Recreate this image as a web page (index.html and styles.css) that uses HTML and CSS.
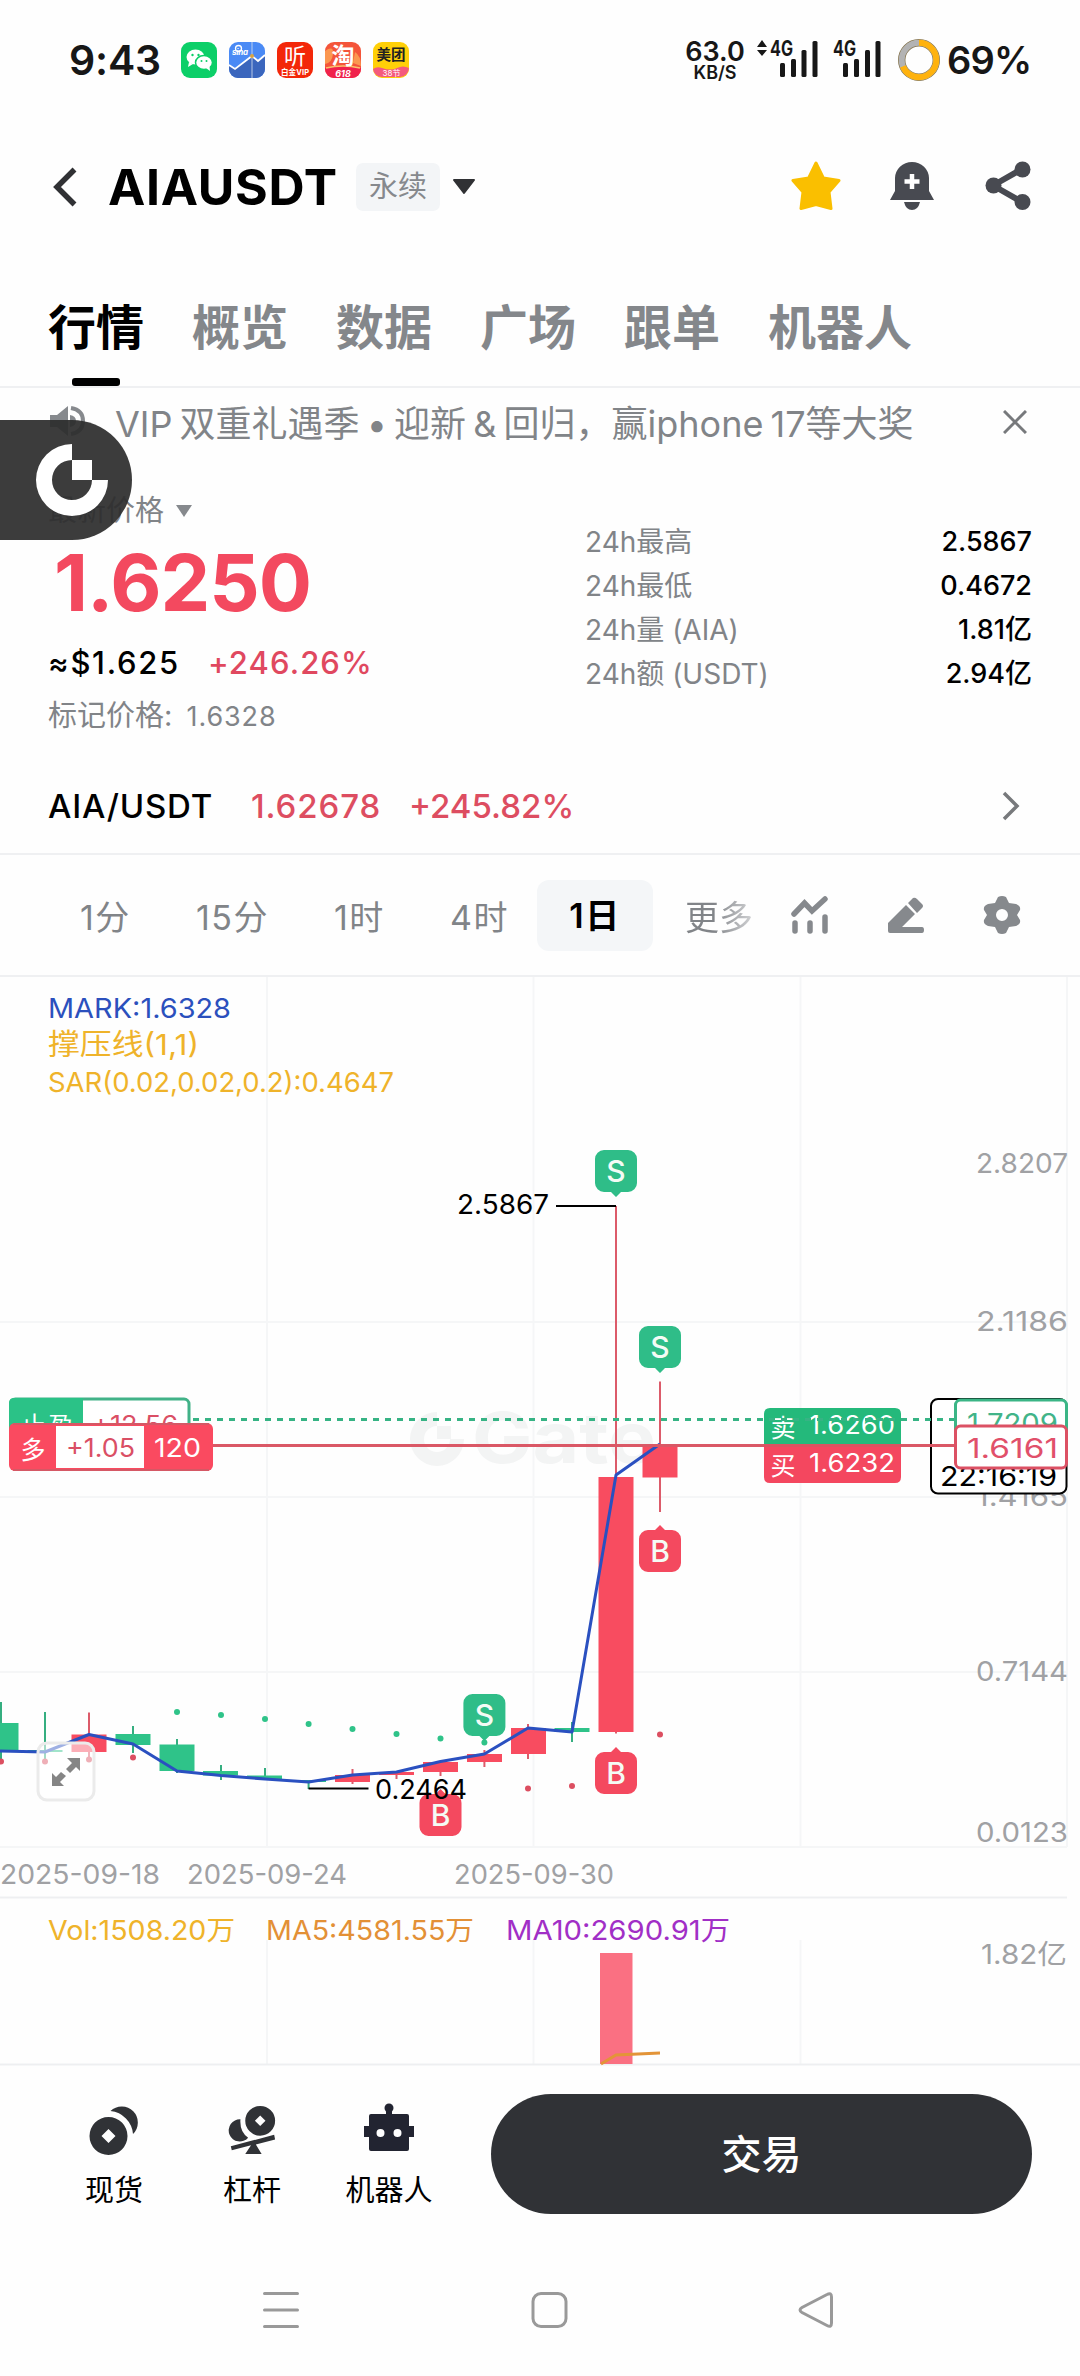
FILE: index.html
```html
<!DOCTYPE html>
<html lang="zh-CN">
<head>
<meta charset="utf-8">
<title>AIAUSDT 永续</title>
<link rel="stylesheet" href="styles.css">
</head>
<body>
<main class="screen">
  <header class="status">
    <span class="clock">9:43</span>
    <div class="apps">
      <svg class="app" viewBox="0 0 36 36"><rect width="36" height="36" rx="9" fill="#0ccf68"/><g fill="#fff"><ellipse cx="14.500" cy="15" rx="9" ry="7.500"/><path d="M8 20l-1 5 5-3z"/><ellipse cx="23" cy="20.500" rx="8.500" ry="7" stroke="#0ccf68" stroke-width="1.500"/><path d="M25 26l4 3-.5-5z"/></g><g fill="#0ccf68"><circle cx="11.500" cy="13" r="1.200"/><circle cx="17.500" cy="13" r="1.200"/><circle cx="20.500" cy="19" r="1"/><circle cx="25.500" cy="19" r="1"/></g></svg>
      <svg class="app" viewBox="0 0 36 36"><rect width="36" height="36" rx="9" fill="#4a8af5"/><path d="M0 23l6 4 17-13 6 5 7-6v14a9 9 0 0 1-9 9H9a9 9 0 0 1-9-9z" fill="#3b66bd"/><path d="M0 23l6 4 17-13 6 5 7-6" fill="none" stroke="#fff" stroke-width="1.800"/><path d="M23 0v36" stroke="#d5dff0" stroke-width=".8"/><circle cx="23" cy="14" r="2" fill="#d9a441"/><circle cx="9.500" cy="6.500" r="3" fill="none" stroke="#fff" stroke-width="1.300"/><text x="3" y="13" class="sina" textLength="16">sina</text></svg>
      <svg class="app" viewBox="0 0 36 36"><rect width="36" height="36" rx="9" fill="#f32709"/><text x="18" y="22" class="app-t" font-size="22">听</text><text x="18" y="33" class="app-t app-b" font-size="7.500" textLength="28">白金VIP</text></svg>
      <svg class="app" viewBox="0 0 36 36"><rect width="36" height="36" rx="9" fill="#f4553a"/><path d="M0 9Q9 3 8 12T0 22zM30 10q6 4 6 14l-8-3z" fill="#fb9750"/><path d="M0 26q18-4 36 0v1a9 9 0 0 1-9 9H9a9 9 0 0 1-9-9z" fill="#f0224c"/><path d="M1 26q17-4 34 0" fill="none" stroke="#fbc16b" stroke-width="1.500"/><text x="18" y="21.500" class="app-t app-b" font-size="23">淘</text><text x="18" y="34.500" class="app-t app-b" font-size="9" font-style="italic">618</text></svg>
      <svg class="app" viewBox="0 0 36 36"><rect width="36" height="36" rx="9" fill="#ffd008"/><path d="M0 27q4-3 9-1 9 3 15 0 6-3 12 0a9 9 0 0 1-9 9H9a9 9 0 0 1-9-8z" fill="#f45a7d"/><text x="18" y="18" class="app-d" font-size="14.500">美团</text><text x="18.500" y="34" class="app-t" font-size="8">38节</text></svg>
    </div>
    <div class="speed"><b>63.0</b><span>KB/S</span></div>
    <svg class="signals" width="110" height="44" viewBox="756 38 110 44" fill="#171717"><path d="M757 47l5-7 5 7zM757 50h10l-5 6z"/><text x="770" y="56" class="sig" textLength="23" lengthAdjust="spacingAndGlyphs">4G</text><rect x="780" y="63" width="5" height="14" rx="1.500"/><rect x="791" y="59" width="5" height="18" rx="1.500"/><rect x="801.500" y="50" width="5" height="27" rx="1.500"/><rect x="812.500" y="41" width="5" height="36" rx="1.500"/></svg>
    <svg class="signals second" width="50" height="44" viewBox="832 38 50 44" fill="#171717"><text x="833" y="56" class="sig" textLength="23" lengthAdjust="spacingAndGlyphs">4G</text><rect x="843" y="63" width="5" height="14" rx="1.500"/><rect x="854" y="59" width="5" height="18" rx="1.500"/><rect x="865" y="50" width="5" height="27" rx="1.500"/><rect x="875.500" y="41" width="5" height="36" rx="1.500"/></svg>
    <svg class="ring" viewBox="0 0 42 42"><circle cx="21" cy="21" r="17.300" fill="none" stroke="#84734d" stroke-width="7.400"/><circle cx="21" cy="21" r="17.300" fill="none" stroke="#b3b3b3" stroke-width="6"/><circle cx="21" cy="21" r="17.300" fill="none" stroke="#ffb20d" stroke-width="6" pathLength="100" stroke-dasharray="69 31" transform="rotate(-90 21 21)"/></svg>
    <span class="battery">69%</span>
  </header>

  <section class="titlebar">
    <svg class="back" viewBox="0 0 24 40"><path d="M21.500 2.500L4 20l17.500 17.500" fill="none" stroke="#303134" stroke-width="5.500"/></svg>
    <h1>AIAUSDT</h1>
    <span class="kind">永续</span>
    <svg class="caret" viewBox="0 0 24 16"><path d="M2 1h20L12 14z" fill="#303134" stroke="#303134" stroke-width="2" stroke-linejoin="round"/></svg>
    <svg class="star" viewBox="0 0 50 50"><path d="M25 2l7.300 15L48 19.500 38 31l2 16.500L25 43.500 10 47.500 12 31 2 19.500 17.700 17z" fill="#fabf00" stroke="#fabf00" stroke-width="3" stroke-linejoin="round"/></svg>
    <svg class="bell" viewBox="0 0 44 50"><path d="M5 17a17 16 0 0 1 34 0v13l5 9H0l5-9z" fill="#484a51"/><path d="M14 41h16q-2 8-8 8t-8-8z" fill="#484a51"/><path d="M22 13v15M14.500 20.500h15" stroke="#fff" stroke-width="4.500"/></svg>
    <svg class="share" viewBox="0 0 46 50" fill="#484a51"><path d="M8 24.500L37 8M8 24.500L37 41" stroke="#484a51" stroke-width="6"/><circle cx="8.500" cy="24.500" r="8"/><circle cx="37.500" cy="8.500" r="8"/><circle cx="37.500" cy="41" r="8"/></svg>
  </section>

  <nav class="tabs"><a class="on">行情</a><a>概览</a><a>数据</a><a>广场</a><a>跟单</a><a>机器人</a></nav>

  <section class="notice">
    <svg class="speaker" viewBox="0 0 36 32"><path d="M0 10h7L18 1v30L7 22H0z" fill="#86898d"/><path d="M21 3q12 2 12 13T21 29" fill="none" stroke="#86898d" stroke-width="4"/><path d="M20 10q6 1 6 6t-6 6z" fill="#86898d"/></svg>
    <p>VIP 双重礼遇季 • 迎新 &amp; 回归，赢iphone 17等大奖</p>
    <svg class="close" viewBox="0 0 24 24"><path d="M1 1l22 22M23 1L1 23" stroke="#77797c" stroke-width="3"/></svg>
  </section>
  <div class="float">
    <svg viewBox="0 0 132 120"><path d="M72 24A36 36 0 1 0 108 60H92A20 20 0 1 1 72 40z" fill="#fff"/><path d="M72 40h20v20H72z" fill="#fff"/></svg>
  </div>

  <section class="quote">
    <div class="price">
      <div class="label">最新价格<svg viewBox="0 0 16 12"><path d="M0 0h16L8 12z" fill="#86898d"/></svg></div>
      <strong>1.6250</strong>
      <div class="fiat"><span>≈$1.625</span><span class="up">+246.26%</span></div>
      <div class="mark">标记价格: <span>1.6328</span></div>
    </div>
    <dl class="stats">
      <dt>24h最高</dt><dd>2.5867</dd>
      <dt>24h最低</dt><dd>0.4672</dd>
      <dt>24h量 (AIA)</dt><dd>1.81亿</dd>
      <dt>24h额 (USDT)</dt><dd>2.94亿</dd>
    </dl>
  </section>

  <section class="spot">
    <span class="pair">AIA/USDT</span><span class="last">1.62678</span><span class="chg">+245.82%</span>
    <svg viewBox="0 0 18 30"><path d="M2 2l13 13L2 28" fill="none" stroke="#77797c" stroke-width="3.500"/></svg>
  </section>

  <section class="periods">
    <div class="choices"><span>1分</span><span>15分</span><span>1时</span><span>4时</span><span class="on">1日</span><span class="more">更多</span></div>
    <svg viewBox="0 0 38 38"><path d="M3 18L13.500 7 21 15 34 3" fill="none" stroke="#86898d" stroke-width="5.500" stroke-linecap="round"/><path d="M4 27v8M19 27v8M34 21v14" stroke="#86898d" stroke-width="5.500" stroke-linecap="round"/></svg>
    <svg viewBox="0 0 38 38" fill="#86898d"><path d="M1 27L19 9l9 9-13 13h20q2 0 2 3t-2 3H3q-2 0-2-2zM21 7l5-5q2-1 4 1l5 5q2 2 0 4l-5 5z"/></svg>
    <svg viewBox="0 0 38 38"><path fill-rule="evenodd" d="M15 1q4-2 8 0l3 6 7 1q5 2 4 6l-3 5 3 5q1 4-4 6l-7 1-3 6q-4 2-8 0l-3-6-7-1q-5-2-4-6l3-5-3-5q-1-4 4-6l7-1zM19 13a6 6 0 1 0 0 12 6 6 0 1 0 0-12z" fill="#86898d"/></svg>
  </section>

  <svg class="chart" viewBox="0 977 1080 1089">
    <defs>
      <path id="tagS" d="M-12-47h24a9 9 0 0 1 9 9v24a9 9 0 0 1-9 9H5L0 0-5-5h-7a9 9 0 0 1-9-9v-24a9 9 0 0 1 9-9z"/>
      <path id="tagB" d="M-12 47h24a9 9 0 0 0 9-9V14a9 9 0 0 0-9-9H5L0 0-5 5h-7a9 9 0 0 0-9 9v24a9 9 0 0 0 9 9z"/>
    </defs>
    <path class="grid" d="M267 977V1847M533.500 977V1847M800.500 977V1847M1067 977V1847M0 1322H1067M0 1497H1067M0 1672H1067M0 1847H1067M267 1940V2064M533.500 1940V2064M800.500 1940V2064"/>
    <path d="M0 1897.500H1067M0 2064.500H1080" stroke="#eeeff1" stroke-width="2"/>
    <g class="water"><path d="M437 1412a27 27 0 1 0 27 27h-14a13 13 0 1 1-13-13z"/><path d="M437 1426h14v13h-14z"/><text x="472" y="1463" textLength="184" lengthAdjust="spacingAndGlyphs">Gate</text></g>

    <g class="legend">
      <text x="48" y="1018" textLength="183" lengthAdjust="spacingAndGlyphs" fill="#2b50bd">MARK:1.6328</text>
      <text x="48" y="1055" textLength="151" lengthAdjust="spacingAndGlyphs" fill="#efb32a" font-size="29">撑压线(1,1)</text>
      <text x="48" y="1092" textLength="346" lengthAdjust="spacingAndGlyphs" fill="#efb32a">SAR(0.02,0.02,0.2):0.4647</text>
      <text x="48" y="1940" textLength="187" lengthAdjust="spacingAndGlyphs" fill="#efb32a">Vol:1508.20万</text>
      <text x="266" y="1940" textLength="208" lengthAdjust="spacingAndGlyphs" fill="#e39036">MA5:4581.55万</text>
      <text x="506" y="1940" textLength="224" lengthAdjust="spacingAndGlyphs" fill="#a12fc6">MA10:2690.91万</text>
    </g>
    <g class="axis">
      <text x="976" y="1173" textLength="92" lengthAdjust="spacingAndGlyphs">2.8207</text>
      <text x="976" y="1331" textLength="92" lengthAdjust="spacingAndGlyphs">2.1186</text>
      <text x="976" y="1506" textLength="92" lengthAdjust="spacingAndGlyphs">1.4165</text>
      <text x="976" y="1681" textLength="92" lengthAdjust="spacingAndGlyphs">0.7144</text>
      <text x="976" y="1842" textLength="92" lengthAdjust="spacingAndGlyphs">0.0123</text>
      <text x="0" y="1884" textLength="160" lengthAdjust="spacingAndGlyphs">2025-09-18</text>
      <text x="187" y="1884" textLength="160" lengthAdjust="spacingAndGlyphs">2025-09-24</text>
      <text x="454" y="1884" textLength="160" lengthAdjust="spacingAndGlyphs">2025-09-30</text>
      <text x="981" y="1964" textLength="86" lengthAdjust="spacingAndGlyphs">1.82亿</text>
    </g>

    <g class="green">
      <path d="M1 1702V1762M45 1712V1760M133 1726V1753M177 1739V1773M221 1765V1780M265 1768V1780M308.600 1780V1789M572 1722V1742"/>
      <path d="M0 1723h18.500v28H0zM27.500 1750h35v2h-35zM115.500 1734h35v11h-35zM159.500 1744.500h35V1771h-35zM203 1771h35v4.500h-35zM247 1775.500h35v3.500h-35zM291 1780h35v2h-35zM554.500 1728h35v4h-35z"/>
      <g stroke="none"><circle cx="177" cy="1712" r="3"/><circle cx="221" cy="1715" r="3"/><circle cx="265" cy="1719" r="3"/><circle cx="308.600" cy="1724" r="3"/><circle cx="352.500" cy="1729" r="3"/><circle cx="396.500" cy="1734" r="3"/><circle cx="440.500" cy="1738.500" r="3"/><circle cx="484.400" cy="1742.500" r="3"/></g>
    </g>
    <g class="red">
      <path d="M89 1712.500V1760M352.500 1769V1784M396.500 1772V1779M440.500 1761V1776M484.400 1750V1767M528 1724V1759M616 1206V1733.500M660 1381.500V1512"/>
      <path d="M71.500 1734.500h35V1752h-35zM335 1775h35v7h-35zM379 1772h35v3h-35zM423 1762h35v10h-35zM467 1754h35v8h-35zM511 1728h35v26h-35zM598.500 1477h35v255h-35zM642.500 1445h35v32.500h-35z" stroke="none"/>
      <g stroke="none" fill="#dc4f61"><circle cx="1" cy="1761.500" r="3"/><circle cx="45" cy="1761.500" r="3"/><circle cx="89" cy="1759.500" r="3"/><circle cx="133" cy="1757.500" r="3"/><circle cx="528" cy="1788.500" r="3"/><circle cx="572" cy="1786" r="3"/><circle cx="660" cy="1734.500" r="3"/></g>
    </g>
    <polyline points="0,1751 45,1752 89,1734.500 133,1744 177,1771 221,1775.500 265,1779 308.600,1782 352.500,1775 396.500,1772 440.500,1761.500 484.400,1754 528,1728 572,1732 616,1475 660,1444" fill="none" stroke="#2a50c0" stroke-width="3" stroke-linejoin="round"/>

    <g class="pins">
      <g fill="#2fbd88"><use href="#tagS" x="616" y="1197"/><use href="#tagS" x="660" y="1373"/><use href="#tagS" x="484.400" y="1741"/></g>
      <g fill="#f4495f"><use href="#tagB" x="660" y="1525"/><use href="#tagB" x="616" y="1747"/><use href="#tagB" x="440.500" y="1789"/></g>
      <text x="616" y="1182">S</text><text x="660" y="1358">S</text><text x="484.400" y="1726">S</text><text x="660" y="1562">B</text><text x="616" y="1784">B</text><text x="440.500" y="1826">B</text>
    </g>
    <path d="M556 1206H616M308.600 1788.500H368.500" stroke="#000" stroke-width="2"/>
    <text x="457" y="1214" textLength="92" lengthAdjust="spacingAndGlyphs">2.5867</text>
    <text x="375" y="1799" textLength="92" lengthAdjust="spacingAndGlyphs">0.2464</text>

    <path d="M213 1445.500H954" stroke="#da5866" stroke-width="3"/>
    <rect x="10.500" y="1399" width="178.500" height="60" rx="5" fill="#fff" stroke="#42b288" stroke-width="3"/><path d="M83 1398v40H9v-35q0-5 5-5z" fill="#2bc287"/>
    <g class="small"><text x="21" y="1435" textLength="52" fill="#fff">止盈</text><text x="92" y="1434" textLength="86" lengthAdjust="spacingAndGlyphs" fill="#da4f65">+12.56</text></g>
    <rect x="9" y="1423" width="204" height="48" rx="6" fill="#fa4a60"/><path d="M13 1424H209M13 1470H209" stroke="#d55865" stroke-width="2"/><rect x="56" y="1426" width="88" height="42" fill="#fff"/>
    <g class="small"><text x="20.500" y="1459" fill="#fff">多</text><text x="66" y="1457" textLength="69" lengthAdjust="spacingAndGlyphs" fill="#da4f65">+1.05</text><text x="154" y="1457" textLength="47" lengthAdjust="spacingAndGlyphs" fill="#fff">120</text></g>
    <path d="M764 1446V1414q0-6 6-6H895q6 0 6 6V1446z" fill="#24b97b"/><path d="M764 1446V1477q0 6 6 6H895q6 0 6-6V1446z" fill="#f4475f"/>
    <g class="small" fill="#fff"><text x="770.500" y="1437">卖</text><text x="809" y="1434" textLength="86" lengthAdjust="spacingAndGlyphs">1.6260</text><text x="770.500" y="1475">买</text><text x="809" y="1472" textLength="86" lengthAdjust="spacingAndGlyphs">1.6232</text></g>
    <path d="M764 1445.500H901" stroke="#dc5261" stroke-width="3"/>
    <rect x="931" y="1399" width="135.500" height="94.500" rx="7" fill="#fff" stroke="#000" stroke-width="2"/><text x="940" y="1486" textLength="117" lengthAdjust="spacingAndGlyphs">22:16:19</text>
    <path d="M193 1419.500H954" stroke="#36b384" stroke-width="3" stroke-dasharray="6 6"/><path d="M901 1445.500H954" stroke="#da5866" stroke-width="3"/>
    <rect x="955.500" y="1400" width="111" height="50" rx="5" fill="#fff" stroke="#3bb586" stroke-width="3"/><text x="967" y="1433" textLength="91" lengthAdjust="spacingAndGlyphs" fill="#42b489">1.7209</text>
    <rect x="955.500" y="1426" width="111" height="42" rx="5" fill="#fff" stroke="#dc5164" stroke-width="3"/><text x="967" y="1458" textLength="91" lengthAdjust="spacingAndGlyphs" fill="#e1506a">1.6161</text>

    <rect x="38" y="1743" width="56" height="57" rx="9" fill="#fff" fill-opacity=".55" stroke="#ebebeb" stroke-width="3"/>
    <path d="M67 1758h13v13l-4-4-6 6-4-4 6-6zM52 1786v-13l4 4 5-5 5 4-6 6 4 4z" fill="#858585"/>
    <rect x="600" y="1953" width="32.500" height="111" fill="#fa7082"/><path d="M601 2064L616 2055 660 2053" fill="none" stroke="#e39438" stroke-width="3"/>
  </svg>

  <footer class="actions">
    <a><svg viewBox="0 0 50 52" fill="#303236"><path d="M21.500 8A16 16 0 1 1 44 31 25 25 0 0 0 21.500 8z"/><path fill-rule="evenodd" d="M19.500 14a19 19 0 1 0 0 38 19 19 0 1 0 0-38zm0 12l7 7-7 7-7-7z"/></svg><span>现货</span></a>
    <a><svg viewBox="0 0 50 54" fill="#303236"><path fill-rule="evenodd" d="M33.500 3a15.500 15.500 0 1 0 0 31 15.500 15.500 0 1 0 0-31zm0 10l5.500 5.500-5.500 5.500-5.500-5.500z"/><path d="M13 17a11.500 11.500 0 1 0 8 19Q12 30 13 17zM3 45l45-12 1 5-20 5 6 10H18l6-9-20 5z"/></svg><span>杠杆</span></a>
    <a><svg viewBox="0 0 50 52" fill="#222431"><path d="M22 8h6v8h-6z"/><circle cx="25" cy="5" r="4.500"/><path fill-rule="evenodd" d="M7 11h36q2 0 2 2v10h5v11h-5v12q0 2-2 2H7q-2 0-2-2V34H0V23h5V13q0-2 2-2zM16.500 26a4 4 0 1 0 0 8 4 4 0 1 0 0-8zM33.500 26a4 4 0 1 0 0 8 4 4 0 1 0 0-8z"/></svg><span>机器人</span></a>
    <button>交易</button>
  </footer>

  <nav class="system">
    <svg viewBox="0 0 38 38"><path d="M2.500 3.500h33M2.500 20h33M2.500 36.500h33" stroke="#999" stroke-width="3" stroke-linecap="round"/></svg>
    <svg viewBox="0 0 38 38"><rect x="3" y="3.500" width="33" height="33" rx="8" fill="none" stroke="#999" stroke-width="3"/></svg>
    <svg viewBox="0 0 38 38"><path d="M30 4.500Q34.500 2 34.500 7v26q0 5-4.500 2.500L5 22.500Q1 20 5 17.500z" fill="none" stroke="#999" stroke-width="3"/></svg>
  </nav>
</main>
</body>
</html>
```
FILE: styles.css
```css
* { box-sizing: border-box; }
body { margin: 0; background: #fefefe; color: #000; font-family: Inter, "Noto Sans CJK SC", sans-serif; }
svg { display: block; flex: none; }
h1, p, dl, dd { margin: 0; }
.screen { position: relative; display: flex; flex-direction: column; width: 1080px; height: 2376px; overflow: hidden; white-space: nowrap; }
.screen > * { flex: none; }

.status { display: flex; align-items: center; height: 120px; padding-left: 69px; color: #171717; }
.status > * { flex: none; }
.clock { width: 112px; font-size: 41px; font-weight: 600; letter-spacing: -.2px; }
.apps { display: flex; gap: 12px; }
.app { width: 36px; height: 36px; overflow: visible; }
.app-t { fill: #fff; text-anchor: middle; }
.app-b { font-weight: 700; }
.app-d { fill: #222; font-weight: 700; text-anchor: middle; }
.sina { fill: #fff; font-size: 8px; font-weight: 700; font-style: italic; }
.speed { display: flex; flex-direction: column; align-items: center; width: 60px; margin-left: 276px; }
.speed b { height: 22px; font-size: 27px; line-height: 20px; font-weight: 600; }
.speed span { height: 15px; font-size: 18px; line-height: 17px; font-weight: 600; }
.signals { margin-left: 11px; overflow: visible; }
.second { margin-left: -34px; }
.sig { font-size: 21px; font-weight: 700; }
.ring { width: 42px; height: 42px; margin-left: 16px; }
.battery { margin-left: 7px; font-size: 38px; font-weight: 600; letter-spacing: -.8px; }

.titlebar { display: flex; align-items: center; height: 134px; padding: 0 49px 0 53px; }
.back { width: 24px; height: 40px; }
h1 { width: 248px; margin-left: 31px; font-size: 50px; line-height: 60px; font-weight: 700; letter-spacing: .7px; }
.kind { width: 84px; height: 48px; border-radius: 7px; background: #f3f5f7; color: #86898d; font-size: 29px; line-height: 47px; text-align: center; }
.caret { width: 24px; height: 16px; margin-left: 12px; }
.star { width: 50px; height: 50px; margin-left: 315px; }
.bell { width: 44px; height: 50px; margin-left: 49px; }
.share { width: 46px; height: 50px; margin-left: 51px; }
.star, .bell, .share { margin-top: -2px; }

.tabs { display: flex; gap: 48px; height: 134px; padding-left: 48px; border-bottom: 2px solid #eff0f2; font-size: 48px; line-height: 147px; font-weight: 700; color: #84878b; }
.tabs .on { display: flex; flex-direction: column; align-items: center; color: #000; }
.tabs .on::after { content: ""; width: 48px; height: 8px; margin-top: -23px; border-radius: 3px; background: #000; }

.notice { display: flex; align-items: center; height: 68px; padding: 0 53px 0 50px; color: #818488; }
.speaker { width: 36px; height: 32px; margin-top: -2px; }
.notice p { width: 888px; margin: -3px 0 0 29px; font-size: 36px; word-spacing: -3px; }
.close { width: 24px; height: 24px; }

.float { position: absolute; left: 0; top: 420px; width: 132px; height: 120px; border-radius: 0 60px 60px 0; background: rgba(45, 45, 45, .93); }

.quote { display: flex; justify-content: space-between; height: 298px; padding: 36px 48px 0; color: #818488; }
.price { display: flex; flex-direction: column; align-items: flex-start; }
.label { display: flex; align-items: center; gap: 12px; height: 38px; font-size: 29px; line-height: 38px; }
.label svg { width: 16px; height: 12px; }
.price strong { margin-left: 6px; height: 104px; color: #f3495f; font-size: 79px; line-height: 105px; font-weight: 700; letter-spacing: -1px; }
.fiat { display: flex; height: 50px; color: #000; font-size: 31px; line-height: 57px; font-weight: 500; }
.fiat span:first-child { width: 160px; letter-spacing: 1.7px; }
.fiat .up { color: #e0485f; letter-spacing: 1.1px; }
.mark { height: 50px; font-size: 29px; line-height: 63px; }
.mark span { margin-left: 6px; font-size: 27px; letter-spacing: .9px; }
.stats { display: grid; grid-template-columns: auto auto; grid-auto-rows: 44px; justify-content: space-between; width: 447px; margin-top: 28px; font-size: 28px; line-height: 44px; }
.stats dd { color: #000; font-size: 27px; font-weight: 500; text-align: right; }

.spot { display: flex; align-items: center; height: 101px; padding: 4px 60px 0 48px; border-bottom: 2px solid #eff0f2; font-size: 33px; font-weight: 500; color: #dd4d61; }
.pair { width: 203px; color: #000; letter-spacing: .8px; }
.last { width: 158px; letter-spacing: .9px; }
.chg { flex: 1; }
.spot svg { width: 18px; height: 30px; }

.periods { display: flex; align-items: center; height: 122px; padding-right: 59px; border-bottom: 2px solid #eff0f2; }
.periods > svg { width: 38px; height: 38px; margin-right: 58px; }
.periods > svg:last-child { margin-right: 0; }
.choices { display: flex; align-items: center; width: 791px; flex: none; padding-left: 80px; color: #818488; font-size: 34px; letter-spacing: 1.5px; }
.choices span { width: 116px; flex: none; }
.choices span:nth-child(2) { width: 138px; }
.choices span:nth-child(4) { width: 87px; }
.choices .on { height: 71px; border-radius: 12px; background: #f4f6f8; color: #000; line-height: 71px; font-weight: 600; text-align: center; }
.choices .more { width: 70px; margin-left: 32px; letter-spacing: 0; background: linear-gradient(90deg, #818488 40%, #d5d6d8); background-clip: text; color: transparent; }

.chart { width: 1080px; height: 1089px; font-size: 27px; }
.grid { fill: none; stroke: #f5f6f7; stroke-width: 2; }
.water { fill: #f3f4f4; font-size: 70px; font-weight: 700; }
.axis { fill: #a0a1a4; }
.green { fill: #2fc389; stroke: #35ae80; stroke-width: 2; }
.green path:nth-child(2) { stroke: none; }
.red { fill: #f84c60; stroke: #dc5b6a; stroke-width: 2; }
.pins text { fill: #f4fbf5; font-size: 30px; font-weight: 500; text-anchor: middle; }
.small { font-size: 25px; }

.actions { display: flex; height: 194px; padding: 28px 48px 0 71px; }
.actions a { display: flex; flex-direction: column; align-items: center; width: 86px; margin-right: 52px; font-size: 29px; line-height: 40px; }
.actions a svg { width: 50px; height: 52px; margin: 9px 0 16px; }
.actions a:nth-child(2) { margin-right: 51px; }
.actions a:nth-child(3) { margin-right: 59px; }
.actions button { flex: 1; height: 120px; padding: 2px 0 0; border: 0; border-radius: 60px; background: #303236; color: #fff; font: 500 40px/1 Inter, "Noto Sans CJK SC", sans-serif; }

.system { display: flex; justify-content: space-between; padding: 30px 245px 0 262px; }
.system svg { width: 38px; height: 38px; }
```
